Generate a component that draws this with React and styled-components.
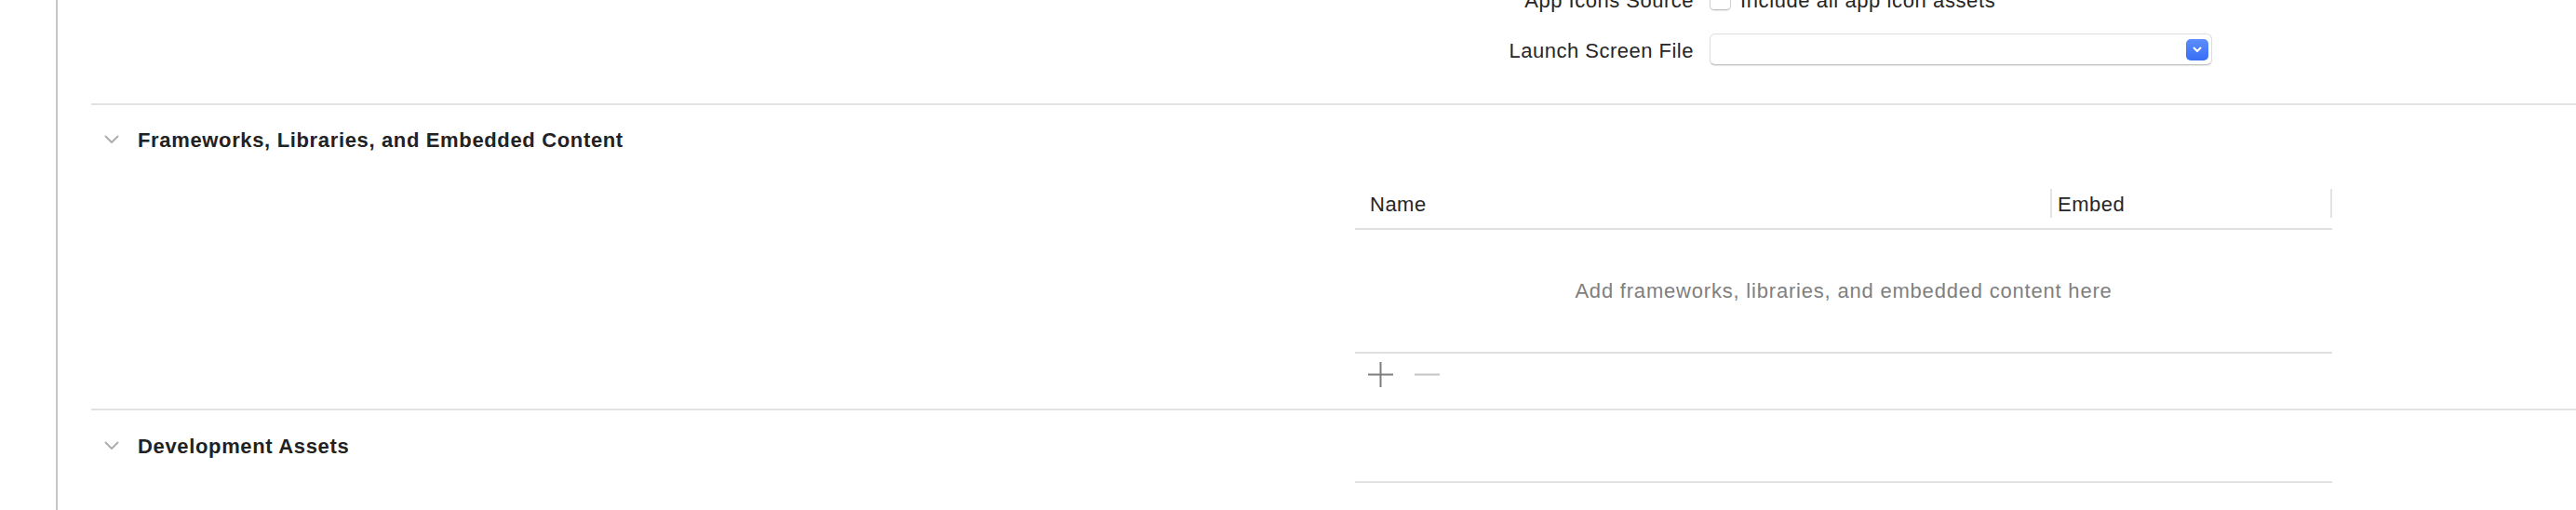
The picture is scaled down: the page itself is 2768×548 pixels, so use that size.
import React from "react";
import styled, { createGlobalStyle } from "styled-components";

const GlobalStyle = createGlobalStyle`
  html, body { margin: 0; padding: 0; background: #ffffff; }
  body { width: 2768px; height: 548px; overflow: hidden; }
  #root { height: 548px; }
`;

const Window = styled.div`
  display: flex;
  width: 2768px;
  height: 548px;
  overflow: hidden;
  background: #ffffff;
  color: #262626;
  font-family: "Liberation Sans", Arial, sans-serif;
  font-size: 22px;
  letter-spacing: 0.5px;
`;

const Gutter = styled.div`
  width: 60px;
  flex: none;
  border-right: 2px solid #c6c6c6;
`;

const Main = styled.div`
  flex: 1;
  min-width: 0;
  display: flex;
  flex-direction: column;
`;

const Form = styled.div`
  display: flex;
  flex-direction: column;
  gap: 20px;
  margin-top: -18px;
  padding-bottom: 41px;
`;

const FormRow = styled.div`
  display: grid;
  grid-template-columns: 1758px 540px;
  column-gap: 17px;
  align-items: center;
  height: 34px;
`;

const Label = styled.div`
  text-align: right;
  white-space: nowrap;
  padding-top: 4px;
`;

const CheckField = styled.label`
  display: flex;
  align-items: center;
  gap: 10px;
  white-space: nowrap;
`;

const CheckBox = styled.span`
  width: 23px;
  height: 23px;
  box-sizing: border-box;
  border: 1px solid #d0d0d0;
  border-bottom-color: #bdbdbd;
  border-radius: 5px;
  background: #ffffff;
  box-shadow: 0 1px 1px rgba(0, 0, 0, 0.08);
`;

const CheckText = styled.span`
  padding-top: 4px;
  letter-spacing: 0.6px;
`;

const Popup = styled.div`
  width: 540px;
  height: 34px;
  box-sizing: border-box;
  border: 1px solid #dedede;
  border-bottom-color: #c2c2c2;
  border-radius: 6px;
  background: #ffffff;
  box-shadow: 0 1px 1px rgba(0, 0, 0, 0.1);
  display: flex;
  align-items: center;
  justify-content: flex-end;
  padding-right: 3px;
`;

const PopupButton = styled.span`
  width: 24px;
  height: 23px;
  border-radius: 5px;
  background: linear-gradient(#5c8dfb, #3a6ef4);
  display: flex;
  align-items: center;
  justify-content: center;
`;

const Section = styled.section`
  margin-left: 36px;
  border-top: 2px solid #e3e3e3;
  padding-bottom: ${(p) => p.$pb || 0}px;
`;

const SectionHeader = styled.div`
  display: flex;
  align-items: center;
  gap: 20px;
  height: ${(p) => p.$h}px;
  padding-left: 14px;
`;

const SectionTitle = styled.h2`
  margin: 0;
  padding-top: 2px;
  font-size: 22px;
  font-weight: 700;
  letter-spacing: 0.65px;
  color: #222222;
  white-space: nowrap;
`;

const SectionBody = styled.div`
  padding-left: 1358px;
`;

const Table = styled.div`
  width: 1050px;
  margin-top: ${(p) => p.$mt || 0}px;
`;

const TableHeader = styled.div`
  display: flex;
  align-items: flex-start;
  height: 44px;
  border-bottom: 2px solid #e0e0e0;
`;

const HeaderCell = styled.div`
  display: flex;
  align-items: center;
  height: 31px;
  margin-top: 2px;
  padding-top: 3px;
  box-sizing: border-box;
  white-space: nowrap;
  ${(p) =>
    p.$first
      ? `width: 747px; padding-left: 16px;`
      : `flex: 1; padding-left: 6px; border-left: 2px solid #e3e3e3; border-right: 2px solid #e3e3e3;`}
`;

const EmptyBody = styled.div`
  height: 131px;
  border-bottom: 2px solid #e0e0e0;
  display: flex;
  align-items: center;
  justify-content: center;
  color: #7f7f7f;
  letter-spacing: 0.8px;
`;

const Toolbar = styled.div`
  display: flex;
  gap: 23px;
  padding: 9px 0 0 14px;
`;

const ToolButton = styled.button`
  width: 27px;
  height: 27px;
  padding: 0;
  border: 0;
  background: transparent;
  display: flex;
  align-items: center;
  justify-content: center;
`;

const Rule = styled.div`
  width: 1050px;
  height: 2px;
  background: #e3e3e3;
`;

const Chevron = () => (
  <svg width="16" height="10" viewBox="0 0 16 10" fill="none">
    <polyline
      points="1.5,1.5 8,8 14.5,1.5"
      stroke="#adadad"
      strokeWidth="2"
      strokeLinecap="round"
      strokeLinejoin="round"
    />
  </svg>
);

const SmallChevron = () => (
  <svg width="10" height="7" viewBox="0 0 10 7" fill="none">
    <polyline
      points="1.5,1.5 5,5 8.5,1.5"
      stroke="#ffffff"
      strokeWidth="2"
      strokeLinecap="round"
      strokeLinejoin="round"
    />
  </svg>
);

const PlusIcon = () => (
  <svg width="27" height="27" viewBox="0 0 27 27">
    <line x1="13.5" y1="0" x2="13.5" y2="27" stroke="#7d7d7d" strokeWidth="2" />
    <line x1="0" y1="13.5" x2="27" y2="13.5" stroke="#7d7d7d" strokeWidth="2" />
  </svg>
);

const MinusIcon = () => (
  <svg width="27" height="27" viewBox="0 0 27 27">
    <line x1="0" y1="13.5" x2="27" y2="13.5" stroke="#c4c4c4" strokeWidth="2" />
  </svg>
);

export default function App() {
  return (
    <>
      <GlobalStyle />
      <Window>
        <Gutter />
        <Main>
          <Form>
            <FormRow>
              <Label>App Icons Source</Label>
              <CheckField>
                <CheckBox />
                <CheckText>Include all app icon assets</CheckText>
              </CheckField>
            </FormRow>
            <FormRow>
              <Label>Launch Screen File</Label>
              <Popup>
                <PopupButton>
                  <SmallChevron />
                </PopupButton>
              </Popup>
            </FormRow>
          </Form>

          <Section $pb={23}>
            <SectionHeader $h={74}>
              <Chevron />
              <SectionTitle>Frameworks, Libraries, and Embedded Content</SectionTitle>
            </SectionHeader>
            <SectionBody>
              <Table $mt={14}>
                <TableHeader>
                  <HeaderCell $first>Name</HeaderCell>
                  <HeaderCell>Embed</HeaderCell>
                </TableHeader>
                <EmptyBody>Add frameworks, libraries, and embedded content here</EmptyBody>
                <Toolbar>
                  <ToolButton aria-label="Add">
                    <PlusIcon />
                  </ToolButton>
                  <ToolButton aria-label="Remove">
                    <MinusIcon />
                  </ToolButton>
                </Toolbar>
              </Table>
            </SectionBody>
          </Section>

          <Section>
            <SectionHeader $h={76}>
              <Chevron />
              <SectionTitle>Development Assets</SectionTitle>
            </SectionHeader>
            <SectionBody>
              <Rule />
            </SectionBody>
          </Section>
        </Main>
      </Window>
    </>
  );
}
